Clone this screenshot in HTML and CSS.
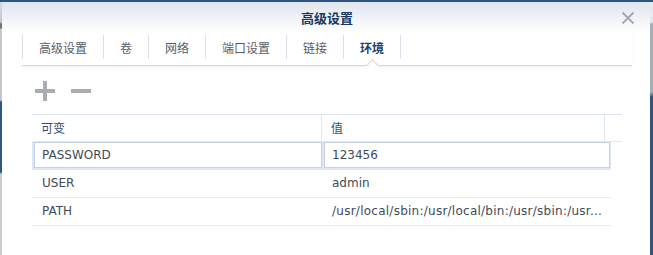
FILE: index.html
```html
<!DOCTYPE html>
<html lang="zh-CN">
<head>
    <meta charset="UTF-8">
    <title>高级设置</title>
    <link rel="stylesheet" href="styles.css">
</head>
<body>
    <div class="topbar"></div>
    <div class="desk">
        <div class="edge-left"></div>
        <div class="window">
            <header class="win-head">
                <h1>高级设置</h1>
                <span class="close">
                    <svg width="14" height="12" viewBox="0 0 14 12">
                        <path d="M1.5 0.5 L12.5 11.5 M12.5 0.5 L1.5 11.5" stroke="#a6a8ab" stroke-width="2" fill="none"/>
                    </svg>
                </span>
            </header>

            <nav class="tabs">
                <a class="tab">高级设置</a>
                <a class="tab">卷</a>
                <a class="tab">网络</a>
                <a class="tab">端口设置</a>
                <a class="tab">链接</a>
                <a class="tab active">环境</a>
            </nav>

            <div class="toolbar">
                <span class="icon-btn">
                    <svg width="20" height="20" viewBox="0 0 20 20">
                        <rect x="0" y="8" width="20" height="4" fill="#a9acb1"/>
                        <rect x="8" y="0" width="4" height="20" fill="#a9acb1"/>
                    </svg>
                </span>
                <span class="icon-btn">
                    <svg width="20" height="20" viewBox="0 0 20 20">
                        <rect x="0" y="8" width="20" height="4" fill="#a9acb1"/>
                    </svg>
                </span>
            </div>

            <div class="grid">
                <div class="grid-head">
                    <div class="hcell name">可变</div>
                    <div class="hcell value">值</div>
                    <div class="hcell spacer"></div>
                </div>
                <div class="row editing">
                    <div class="cell name"><input type="text" value="PASSWORD"></div>
                    <div class="cell value"><input type="text" value="123456"></div>
                </div>
                <div class="row">
                    <div class="cell name">USER</div>
                    <div class="cell value">admin</div>
                </div>
                <div class="row">
                    <div class="cell name">PATH</div>
                    <div class="cell value path">/usr/local/sbin:/usr/local/bin:/usr/sbin:/usr...</div>
                </div>
            </div>
        </div>
        <div class="edge-right"></div>
    </div>
</body>
</html>
```

FILE: styles.css
```css
body {
    margin: 0;
    width: 653px;
    height: 255px;
    overflow: hidden;
    font-family: "DejaVu Sans", "Noto Sans CJK SC", sans-serif;
    font-size: 12px;
    background-color: #ffffff;
}
.topbar {
    height: 2px;
    background-color: #2d5485;
}
.desk {
    display: flex;
    height: 253px;
}
.edge-left {
    width: 2px;
    background: linear-gradient(#d6d9dd 0, #c2c6cb 20px, #6f7378 22px, #6f7378 26px, #c4c8cc 27px, #c4c8cc 98px, #2c5687 100px, #2c5687 170px, #c9ccd0 172px);
}
.edge-right {
    width: 3px;
    background: linear-gradient(#e6eaee 0, #e6eaee 20px, #a7aeb6 22px, #a7aeb6 90px, #2d5485 95px);
}
.window {
    flex: 1;
    background-color: #ffffff;
}
.win-head {
    position: relative;
    height: 31px;
    display: flex;
    align-items: center;
    justify-content: center;
    background: linear-gradient(#dfe5ee, #ffffff);
}
.win-head h1 {
    margin: 0;
    font-family: "Noto Sans CJK SC", sans-serif;
    font-size: 13px;
    font-weight: bold;
    color: #173865;
    padding-left: 2px;
}
.close {
    position: absolute;
    right: 15px;
    top: 10px;
    display: flex;
}
.tabs {
    display: flex;
    margin: 0 18px 0 20px;
    padding: 2px 0 6px;
    border-bottom: 1px solid #d3d5d8;
    box-shadow: 0 1px 2px rgba(0, 0, 0, 0.06);
}
.tab {
    position: relative;
    padding: 0 16px;
    height: 24px;
    line-height: 25px;
    border-left: 1px solid #d9e1ea;
    color: #565e67;
    font-family: "Noto Sans CJK SC", sans-serif;
    font-size: 12px;
}
.tab.active {
    border-right: 1px solid #d9e1ea;
    color: #203f69;
    font-weight: bold;
}
.tab.active::after {
    content: "";
    position: absolute;
    left: 50%;
    bottom: -11px;
    width: 8px;
    height: 8px;
    margin-left: -4px;
    background-color: #ffffff;
    border-top: 1px solid #d3d5d8;
    border-left: 1px solid #d3d5d8;
    transform: rotate(45deg);
}
.toolbar {
    display: flex;
    gap: 16px;
    height: 48px;
    padding: 15px 0 0 33px;
    box-sizing: border-box;
}
.icon-btn {
    display: flex;
    width: 20px;
    height: 20px;
}
.grid {
    margin-left: 30px;
    color: #3f4a56;
}
.grid-head {
    display: flex;
    width: 590px;
    height: 26px;
    border-top: 1px solid #dbe3ec;
    border-bottom: 1px solid #e4e8ed;
}
.hcell {
    line-height: 26px;
    padding-left: 9px;
    box-sizing: border-box;
    color: #2f4d73;
    font-family: "Noto Sans CJK SC", sans-serif;
    border-right: 1px solid #e1e7ef;
}
.hcell.name {
    width: 290px;
}
.hcell.value {
    width: 283px;
}
.hcell.spacer {
    width: 17px;
    padding: 0;
    border-right: none;
}
.row {
    display: flex;
    width: 579px;
    height: 27px;
    border-bottom: 1px solid #e8eaed;
}
.cell {
    line-height: 27px;
    padding: 0 5px 0 10px;
    box-sizing: border-box;
    white-space: nowrap;
    overflow: hidden;
    text-overflow: ellipsis;
}
.cell.name {
    width: 290px;
}
.cell.value {
    width: 289px;
}
.cell.path {
    padding-right: 0;
    letter-spacing: 0.25px;
}
.row.editing {
    background-color: #dde7f3;
    border-bottom-color: #dde7f3;
}
.row.editing .cell {
    padding: 0 0 0 2px;
}
.row.editing .cell.value {
    padding-right: 1px;
}
input {
    display: block;
    width: 100%;
    height: 26px;
    margin: 0;
    padding: 0 7px;
    box-sizing: border-box;
    border: 1px solid #c3d1e2;
    background-color: #ffffff;
    font-family: "DejaVu Sans", sans-serif;
    font-size: 12px;
    color: #3f4a56;
    outline: none;
}
```
